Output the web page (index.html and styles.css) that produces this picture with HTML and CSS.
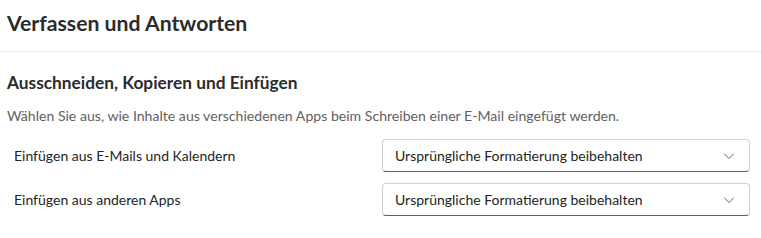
FILE: index.html
```html
<!DOCTYPE html>
<html lang="de">
<head>
  <meta charset="UTF-8">
  <meta name="viewport" content="width=device-width, initial-scale=1.0">
  <title>Verfassen und Antworten</title>
  <link rel="stylesheet" href="styles.css">
</head>
<body>
  <header class="page-header">
    <h1>Verfassen und Antworten</h1>
  </header>

  <section class="settings-section">
    <h2>Ausschneiden, Kopieren und Einfügen</h2>
    <p class="section-desc">Wählen Sie aus, wie Inhalte aus verschiedenen Apps beim Schreiben einer E-Mail eingefügt werden.</p>

    <div class="setting-row">
      <span class="setting-label">Einfügen aus E-Mails und Kalendern</span>
      <div class="dropdown">
        <span class="dropdown-value">Ursprüngliche Formatierung beibehalten</span>
        <svg class="chevron" width="12" height="12" viewBox="0 0 12 12"><path d="M1.5 4 L6 8.5 L10.5 4" fill="none" stroke="#616161" stroke-width="1" stroke-linecap="round" stroke-linejoin="round"/></svg>
      </div>
    </div>

    <div class="setting-row">
      <span class="setting-label">Einfügen aus anderen Apps</span>
      <div class="dropdown">
        <span class="dropdown-value">Ursprüngliche Formatierung beibehalten</span>
        <svg class="chevron" width="12" height="12" viewBox="0 0 12 12"><path d="M1.5 4 L6 8.5 L10.5 4" fill="none" stroke="#616161" stroke-width="1" stroke-linecap="round" stroke-linejoin="round"/></svg>
      </div>
    </div>
  </section>
</body>
</html>
```

FILE: styles.css
```css
body {
  font-family: Lato, "Noto Sans", Arial, sans-serif;
  margin: 0;
  background-color: #ffffff;
  color: #242424;
}

.page-header {
  height: 51px;
  border-bottom: 1px solid #ebebeb;
  padding: 0 7px;
  display: flex;
  align-items: center;
}

.page-header h1 {
  margin: 0;
  font-size: 21.2px;
  font-weight: 700;
  color: #2b2b2b;
  padding-bottom: 6px;
}

.settings-section {
  padding: 0 7px;
}

.settings-section h2 {
  margin: 20px 0 0;
  font-size: 17.3px;
  font-weight: 700;
  line-height: 22px;
  color: #2b2b2b;
}

.section-desc {
  margin: 12px 0 0;
  font-size: 14.1px;
  line-height: 20px;
  color: #616161;
}

.setting-row {
  display: flex;
  align-items: center;
  justify-content: space-between;
  padding-left: 7px;
  margin-top: 13px;
  width: 736px;
}

.setting-row + .setting-row {
  margin-top: 11px;
}

.setting-label {
  font-size: 14px;
}

.dropdown {
  box-sizing: border-box;
  width: 368px;
  height: 33px;
  border: 1px solid #d1d1d1;
  border-bottom-color: #616161;
  border-radius: 4px;
  display: flex;
  align-items: center;
  justify-content: space-between;
  padding: 0 14px 0 12px;
}

.dropdown-value {
  font-size: 14px;
}

.chevron {
  display: block;
}
```
